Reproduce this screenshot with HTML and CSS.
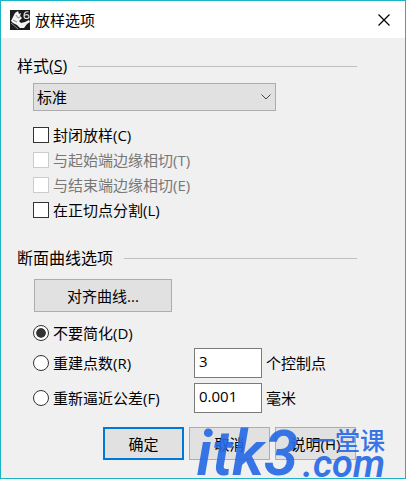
FILE: index.html
```html
<!DOCTYPE html>
<html lang="zh-CN">
<head>
    <meta charset="utf-8"/>
    <title>放样选项</title>
    <link rel="stylesheet" href="styles.css">
</head>
<body>
<form class="dialog">
    <div class="titlebar">
        <svg class="app-icon" viewBox="0 0 20 20" width="20" height="20">
            <rect width="20" height="20" fill="#1c1c1c"/>
            <path d="M8 1 L5 3 L1 11 L3 13 L7 15 L10 18 L14 18 L17 14 L20 12 L19 10 L15 12 L11 13 L9 11 L12 8 L10 6 L11 3 L9 4 Z" fill="#f4f4f4"/>
            <path d="M6 5 L8 8 L10 7 M3 10 L7 12 M1 13 L8 19" fill="none" stroke="#888"/>
            <path d="M18.500 2 C15.500 1 14 3 14 6 C14 9.500 19 9 19 6.500 C19 4 15.500 4 14 6" fill="none" stroke="#ddd" stroke-width="1.200"/>
        </svg>
        <span class="name">放样选项</span>
        <button type="button" class="close" aria-label="关闭">
            <svg viewBox="0 0 12 12" width="12" height="12"><path d="M0.500 0.500 L11.500 11.500 M11.500 0.500 L0.500 11.500" stroke="#000" stroke-width="1.200"/></svg>
        </button>
    </div>
    <div class="content">
        <div class="heading"><label for="style">样式(<u>S</u>)</label><hr></div>
        <div class="group">
            <div class="dropdown">
                <select id="style"><option>标准</option></select>
                <svg class="arrow" viewBox="0 0 10 6" width="10" height="6"><path d="M0.500 0.500 L5 5 L9.500 0.500" fill="none" stroke="#444"/></svg>
            </div>
            <div class="checks">
                <label><input type="checkbox">封闭放样(C)</label>
                <label class="disabled"><input type="checkbox" disabled>与起始端边缘相切(T)</label>
                <label class="disabled"><input type="checkbox" disabled>与结束端边缘相切(E)</label>
                <label><input type="checkbox">在正切点分割(L)</label>
            </div>
        </div>
        <div class="heading"><span>断面曲线选项</span><hr></div>
        <div class="group">
            <button type="button" class="button align">对齐曲线...</button>
            <div class="options">
                <label class="option"><input type="radio" name="simplify" checked>不要简化(D)</label>
                <div class="row">
                    <label class="option"><input type="radio" name="simplify">重建点数(R)</label>
                    <input type="text" id="points" value="3">
                    <label for="points">个控制点</label>
                </div>
                <div class="row">
                    <label class="option"><input type="radio" name="simplify">重新逼近公差(F)</label>
                    <input type="text" id="tolerance" value="0.001">
                    <label for="tolerance">毫米</label>
                </div>
            </div>
        </div>
        <div class="actions">
            <button type="button" class="button default">确定</button>
            <button type="button" class="button">取消</button>
            <button type="button" class="button">说明(H)</button>
        </div>
    </div>
    <div class="watermark">
        <span class="big">itk3</span>
        <span class="side"><span class="cn">一堂课</span><span class="com">.com</span></span>
    </div>
</form>
</body>
</html>
```
FILE: styles.css
```css
* {
    box-sizing: border-box;
}

body {
    margin: 0;
    font-family: 'Open Sans', 'Noto Sans CJK SC', sans-serif;
    font-size: 15px;
    line-height: 20px;
    color: #000;
}

button, input, select {
    margin: 0;
    font: inherit;
    color: inherit;
}

svg {
    display: block;
}

.dialog {
    position: relative;
    min-height: 100vh;
    overflow: hidden;
    background: #f0f0f0;
    border: 1px solid #1cb4c4;
}

.titlebar {
    display: flex;
    align-items: center;
    height: 37px;
    padding: 0 15px 0 9px;
    background: #fff;
}

.titlebar .name {
    flex: 1;
    margin-left: 5px;
}

.titlebar .close {
    padding: 0;
    border: 0;
    background: none;
}

.content {
    padding: 18px 48px 0 16px;
}

.heading {
    display: flex;
    align-items: center;
    gap: 11px;
    font-size: 16px;
}

.heading hr {
    flex: 1;
    margin: 0;
    border: 0;
    border-top: 1px solid #bfbfbf;
}

.group {
    padding: 7px 0 0 16px;
}

.dropdown {
    position: relative;
    width: 243px;
}

.dropdown select {
    display: block;
    width: 100%;
    height: 28px;
    padding: 0 3px;
    appearance: none;
    background: #e1e1e1;
    border: 1px solid #adadad;
    border-radius: 0;
}

.dropdown .arrow {
    position: absolute;
    right: 5px;
    top: 11px;
    pointer-events: none;
}

.checks {
    margin: 11px 0 26px;
}

.checks label {
    display: flex;
    align-items: center;
    gap: 4px;
    height: 25px;
}

.checks .disabled {
    color: #777;
}

input[type=checkbox], input[type=radio] {
    flex: none;
    width: 16px;
    height: 16px;
    appearance: none;
    background: #fff;
    border: 1px solid #333;
}

input[type=checkbox]:disabled {
    border-color: #ccc;
}

input[type=radio] {
    border-radius: 50%;
}

input[type=radio]:checked {
    background: #333;
    background-clip: content-box;
    padding: 2px;
    box-shadow: inset 0 0 0 2px #fff;
}

.button {
    width: 81px;
    height: 33px;
    padding: 0;
    background: #e1e1e1;
    border: 1px solid #adadad;
}

.button.default {
    border: 2px solid #0078d7;
}

.button.align {
    display: block;
    width: 138px;
    margin: 4px 0 0 1px;
}

.options {
    padding-top: 6px;
}

.option {
    display: flex;
    align-items: center;
    gap: 4px;
    height: 30px;
}

.row {
    display: grid;
    grid-template-columns: 161px 68px auto;
    align-items: center;
    margin-bottom: 5px;
}

.row > input {
    width: 100%;
    height: 30px;
    padding: 0 4px 4px;
    background: #fff;
    border: 1px solid #7a7a7a;
    border-radius: 0;
}

.row > label:last-child {
    padding-left: 4px;
}

.actions {
    display: flex;
    justify-content: flex-end;
    gap: 5px;
    padding: 9px 1px 18px 0;
}

/* site mark laid over the lower right corner */
.watermark {
    position: absolute;
    right: 20px;
    bottom: 1px;
    display: flex;
    align-items: flex-end;
    gap: 4px;
    font-family: Roboto, 'Noto Sans CJK SC', sans-serif;
    font-weight: 600;
    color: #2468e6;
    opacity: 0.9;
    pointer-events: none;
}

.watermark .big {
    font-size: 62px;
    font-style: italic;
    line-height: 46px;
}

.watermark .side {
    display: flex;
    flex-direction: column;
}

.watermark .cn {
    font-size: 25px;
    line-height: 18px;
    font-weight: 500;
    text-align: right;
}

.watermark .com {
    font-size: 38px;
    font-style: italic;
    line-height: 26px;
}
```
